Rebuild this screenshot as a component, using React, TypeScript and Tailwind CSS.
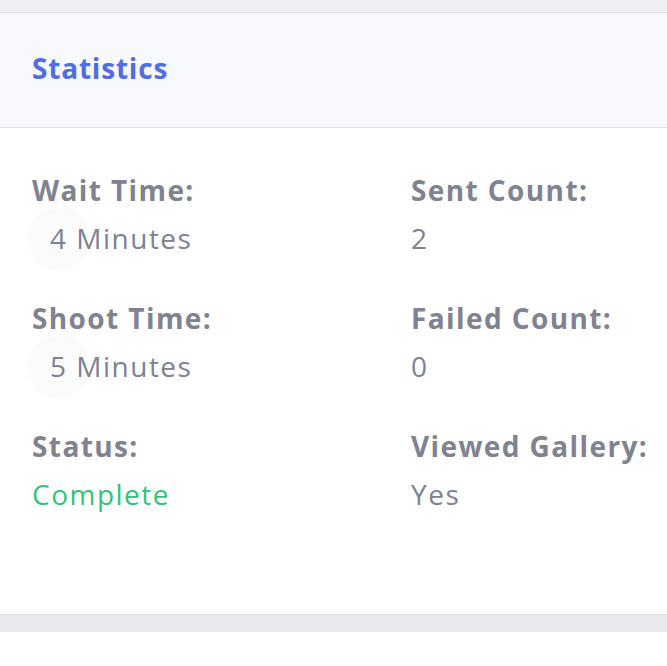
import React from "react";

const stats = [
  { label: "Wait Time:", value: "4 Minutes", dot: true },
  { label: "Sent Count:", value: "2" },
  { label: "Shoot Time:", value: "5 Minutes", dot: true },
  { label: "Failed Count:", value: "0" },
  { label: "Status:", value: "Complete", green: true },
  { label: "Viewed Gallery:", value: "Yes" },
];

const StatItem = (props: any) => {
  return (
    <div className="flex flex-col whitespace-nowrap">
      <p className="text-[28px] leading-[48px] font-bold tracking-[1.4px] text-[#80828f]">{props.label}</p>
      {props.dot ? (
        <p className="relative text-[28px] leading-[48px] tracking-[1.5px] text-[#7f8190] pl-[18px]">
          <span className="absolute left-[-4px] top-[-6px] w-[62px] h-[62px] rounded-full bg-[#fbfbfc]" />
          <span className="relative">{props.value}</span>
        </p>
      ) : (
        <p
          className={
            props.green
              ? "text-[28px] leading-[48px] tracking-[1.5px] text-[#33c27d]"
              : "text-[28px] leading-[48px] tracking-[1.5px] text-[#7f8190]"
          }
        >
          {props.value}
        </p>
      )}
    </div>
  );
};

export default function App() {
  return (
    <div
      className="w-[667px] h-[666px] bg-white overflow-hidden"
      style={{ fontFamily: "'Open Sans', 'Noto Sans', sans-serif" }}
    >
      <div className="h-[12px] bg-[#efeff3]" />
      <div className="h-[116px] bg-[#f8f9fc] border-y border-[#e2e2e9] flex items-center px-8 pb-1">
        <h2 className="text-[28px] font-bold tracking-[0.8px] text-[#4f6ee0]">Statistics</h2>
      </div>
      <div className="grid grid-cols-[379px_1fr] gap-y-8 px-8 pt-[38px] pb-[96px]">
        {stats.map((s) => (
          <StatItem key={s.label} {...s} />
        ))}
      </div>
      <div className="h-[18px] bg-[#e8e8ed] border-t border-[#dedcef]" />
    </div>
  );
}
